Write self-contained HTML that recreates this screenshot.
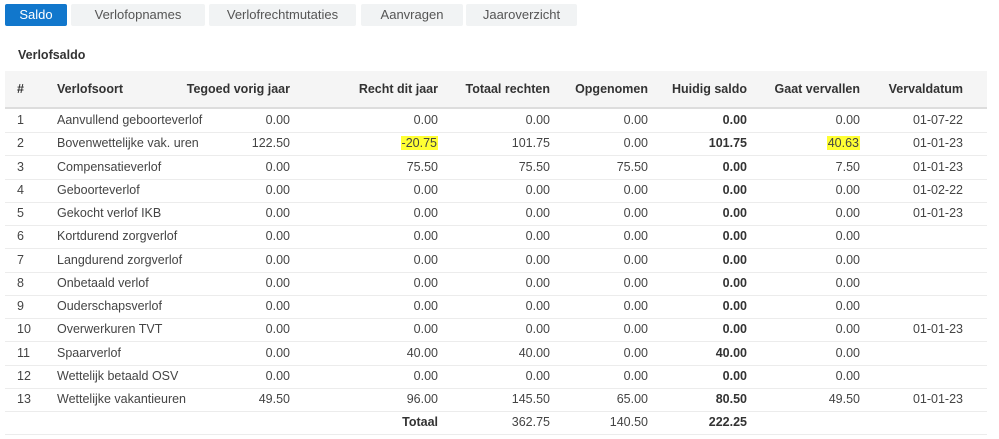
<!DOCTYPE html><html><head><style>
body{margin:0;width:999px;height:439px;background:#fff;font-family:"Liberation Sans",sans-serif;font-size:12.5px;color:#444;position:relative;overflow:hidden}
.tab{position:absolute;top:4px;height:22px;line-height:22px;text-align:center;background:#f1f3f4;color:#555;font-size:13px;border-radius:2px}
.tab.a{background:#1177cc;color:#fff}
.t{position:absolute}
.hdr{position:absolute;left:5px;width:982px;top:71px;height:36px;background:#f5f5f5;border-bottom:2px solid #ddd}
.row{position:absolute;left:5px;width:982px;height:23px;border-bottom:1px solid #ececec}
.c{position:absolute;top:0;line-height:23px;white-space:nowrap}
.r{text-align:right}
b{color:#333}
.hl{background:#ffff33;padding:0 1px}
</style></head><body>
<div class="tab a" style="left:5px;width:62px">Saldo</div>
<div class="tab" style="left:71px;width:134px">Verlofopnames</div>
<div class="tab" style="left:209px;width:147px">Verlofrechtmutaties</div>
<div class="tab" style="left:361px;width:102px">Aanvragen</div>
<div class="tab" style="left:466px;width:111px">Jaaroverzicht</div>
<div class="t" style="left:18px;top:48px;font-weight:bold;color:#333">Verlofsaldo</div>
<div class="hdr"><div style="position:relative;height:36px;line-height:36px;font-weight:bold;color:#333">
<span class="c" style="left:12px;line-height:36px">#</span>
<span class="c" style="left:52px;line-height:36px">Verlofsoort</span>
<span class="c r" style="right:697px;line-height:36px">Tegoed vorig jaar</span>
<span class="c r" style="right:549px;line-height:36px">Recht dit jaar</span>
<span class="c r" style="right:437px;line-height:36px">Totaal rechten</span>
<span class="c r" style="right:339px;line-height:36px">Opgenomen</span>
<span class="c r" style="right:240px;line-height:36px">Huidig saldo</span>
<span class="c r" style="right:127px;line-height:36px">Gaat vervallen</span>
<span class="c r" style="right:24px;line-height:36px">Vervaldatum</span>
</div></div>
<div id="rows"></div>
<script>
var d=[
["1","Aanvullend geboorteverlof","0.00","0.00","0.00","0.00","0.00","0.00","01-07-22"],
["2","Bovenwettelijke vak. uren","122.50","<span class=hl>-20.75</span>","101.75","0.00","101.75","<span class=hl>40.63</span>","01-01-23"],
["3","Compensatieverlof","0.00","75.50","75.50","75.50","0.00","7.50","01-01-23"],
["4","Geboorteverlof","0.00","0.00","0.00","0.00","0.00","0.00","01-02-22"],
["5","Gekocht verlof IKB","0.00","0.00","0.00","0.00","0.00","0.00","01-01-23"],
["6","Kortdurend zorgverlof","0.00","0.00","0.00","0.00","0.00","0.00",""],
["7","Langdurend zorgverlof","0.00","0.00","0.00","0.00","0.00","0.00",""],
["8","Onbetaald verlof","0.00","0.00","0.00","0.00","0.00","0.00",""],
["9","Ouderschapsverlof","0.00","0.00","0.00","0.00","0.00","0.00",""],
["10","Overwerkuren TVT","0.00","0.00","0.00","0.00","0.00","0.00","01-01-23"],
["11","Spaarverlof","0.00","40.00","40.00","0.00","40.00","0.00",""],
["12","Wettelijk betaald OSV","0.00","0.00","0.00","0.00","0.00","0.00",""],
["13","Wettelijke vakantieuren","49.50","96.00","145.50","65.00","80.50","49.50","01-01-23"],
["","","","<b>Totaal</b>","362.75","140.50","222.25","",""]];
var R=[697,549,437,339,240,127,24],h="";
d.forEach(function(r,i){var top=109+i*23.25;
h+='<div class="row" style="top:'+top+'px"><span class="c" style="left:12px">'+r[0]+'</span><span class="c" style="left:52px">'+r[1]+'</span>';
for(var j=0;j<7;j++){var v=r[j+2];if(j==4&&v)v='<b>'+v+'</b>';h+='<span class="c r" style="right:'+R[j]+'px">'+v+'</span>';}
h+='</div>';});
document.getElementById('rows').innerHTML=h;
</script>
</body></html>
